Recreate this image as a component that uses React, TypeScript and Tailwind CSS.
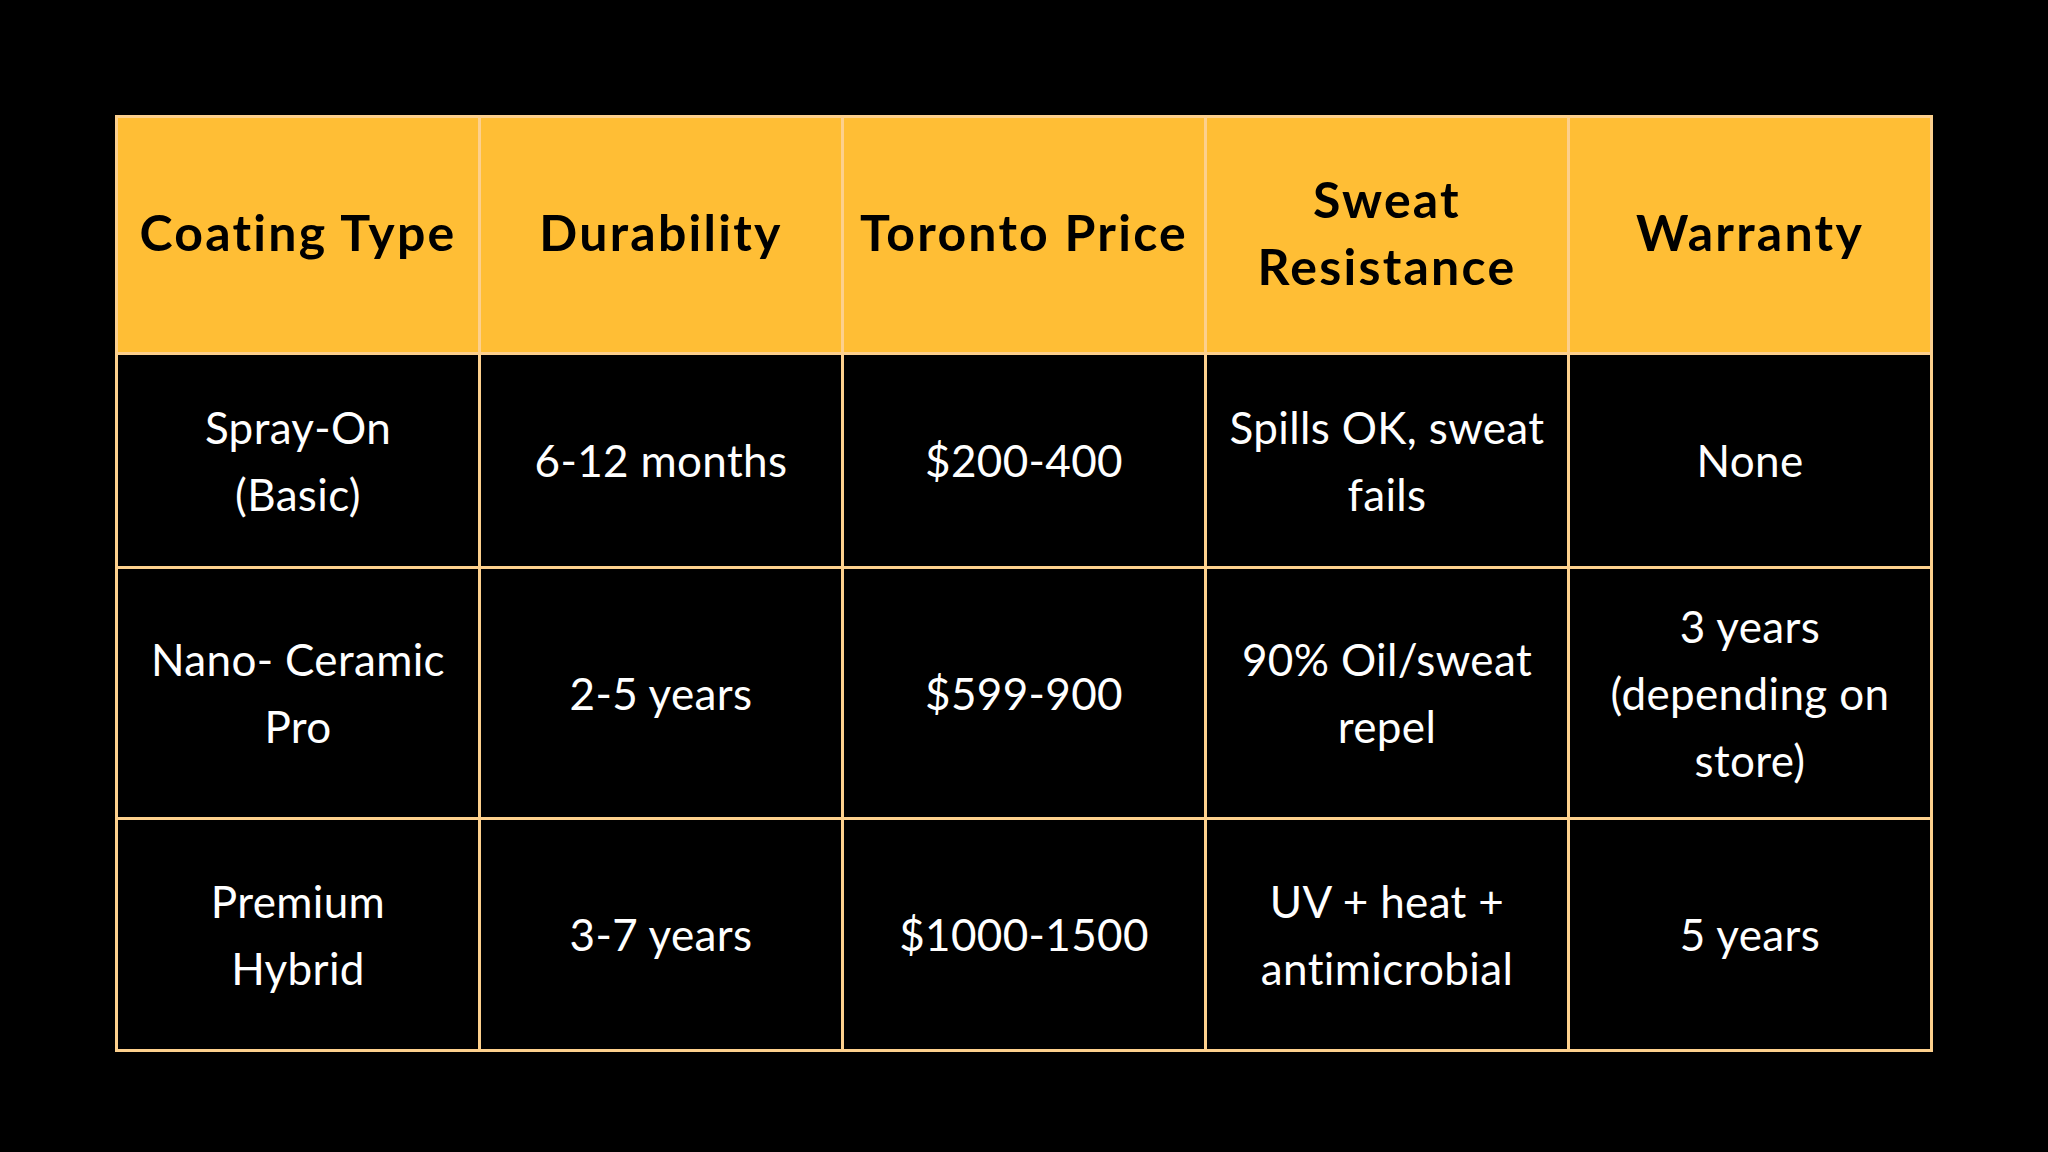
import React from 'react';

type Row = {
  height: string;
  cells: string[][];
};

const headers: string[][] = [
  ['Coating Type'],
  ['Durability'],
  ['Toronto Price'],
  ['Sweat', 'Resistance'],
  ['Warranty'],
];

const rows: Row[] = [
  {
    height: 'h-[211px]',
    cells: [
      ['Spray-On', '(Basic)'],
      ['6-12 months'],
      ['$200-400'],
      ['Spills OK, sweat', 'fails'],
      ['None'],
    ],
  },
  {
    height: 'h-[248px]',
    cells: [
      ['Nano- Ceramic', 'Pro'],
      ['2-5 years'],
      ['$599-900'],
      ['90% Oil/sweat', 'repel'],
      ['3 years', '(depending on', 'store)'],
    ],
  },
  {
    height: 'h-[229px]',
    cells: [
      ['Premium', 'Hybrid'],
      ['3-7 years'],
      ['$1000-1500'],
      ['UV + heat +', 'antimicrobial'],
      ['5 years'],
    ],
  },
];

const App: React.FC = () => {
  return (
    <div className="w-full h-[1152px] bg-black pt-[115px] pl-[115px]">
      <div className="grid grid-cols-[repeat(5,360px)] gap-[3px] p-[3px] bg-[#fdd08d] w-fit">
        {/* Header */}
        {headers.map((lines, i) => (
          <div
            key={i}
            className="h-[234px] bg-[#ffbe35] flex flex-col items-center justify-center pb-[5px] text-black font-bold text-[50px] leading-[67px] tracking-[0.045em] text-center"
            style={{ fontFamily: 'Lato, "Noto Sans", sans-serif' }}
          >
            {lines.map((l, j) => (
              <span key={j}>{l}</span>
            ))}
          </div>
        ))}

        {/* Body rows */}
        {rows.map((row, r) =>
          row.cells.map((lines, c) => (
            <div
              key={`${r}-${c}`}
              className={`${row.height} bg-black flex flex-col items-center justify-center text-white text-[44px] leading-[67px] tracking-[0.008em] text-center`}
              style={{ fontFamily: 'Lato, "Noto Sans", sans-serif' }}
            >
              {lines.map((l, j) => (
                <span key={j}>{l}</span>
              ))}
            </div>
          ))
        )}
      </div>
    </div>
  );
};

export default App;
